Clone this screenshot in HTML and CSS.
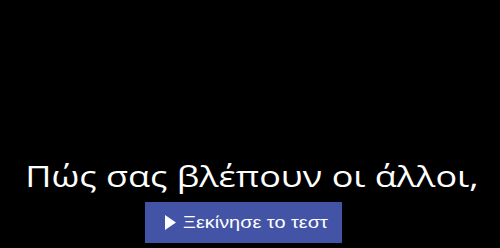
FILE: index.html
```html
<!DOCTYPE html>
<html lang="el">
<head>
    <meta charset="UTF-8">
    <meta name="viewport" content="width=device-width, initial-scale=1.0">
    <title>Πώς σας βλέπουν οι άλλοι</title>
    <link rel="stylesheet" href="styles.css">
</head>
<body>
    <div class="intro">
        <h1 class="titulo">Πώς σας βλέπουν οι άλλοι,</h1>
        <a href="#" class="start-btn">
            <svg class="play" width="11" height="15" viewBox="0 0 11 15"><polygon points="0,0 11,7.5 0,15" fill="#fff"/></svg>
            <span class="label">Ξεκίνησε το τεστ</span>
        </a>
    </div>
</body>
</html>
```

FILE: styles.css
```css
/* Estilos gerais */
body {
    margin: 0;
    background-color: #000;
    font-family: "Open Sans", sans-serif;
}

.intro {
    height: 248px;
    display: flex;
    flex-direction: column;
    align-items: center;
    justify-content: flex-end;
    padding-bottom: 5px;
    box-sizing: border-box;
}

/* a captura esta esticada na horizontal */
.titulo {
    margin: 0 0 10px 4px;
    color: #fff;
    font-weight: 400;
    font-size: 30px;
    line-height: 32px;
    transform: scaleX(1.2);
}

.start-btn {
    display: flex;
    align-items: center;
    width: 197px;
    height: 41px;
    box-sizing: border-box;
    padding-left: 20px;
    margin-right: 13px;
    background-color: #4354a7;
    color: #fff;
    text-decoration: none;
    font-family: "Liberation Sans", Arial, sans-serif;
    font-size: 17px;
}

.play {
    margin-right: 7px;
}

.label {
    transform: scaleX(1.17);
    transform-origin: left center;
}
```
